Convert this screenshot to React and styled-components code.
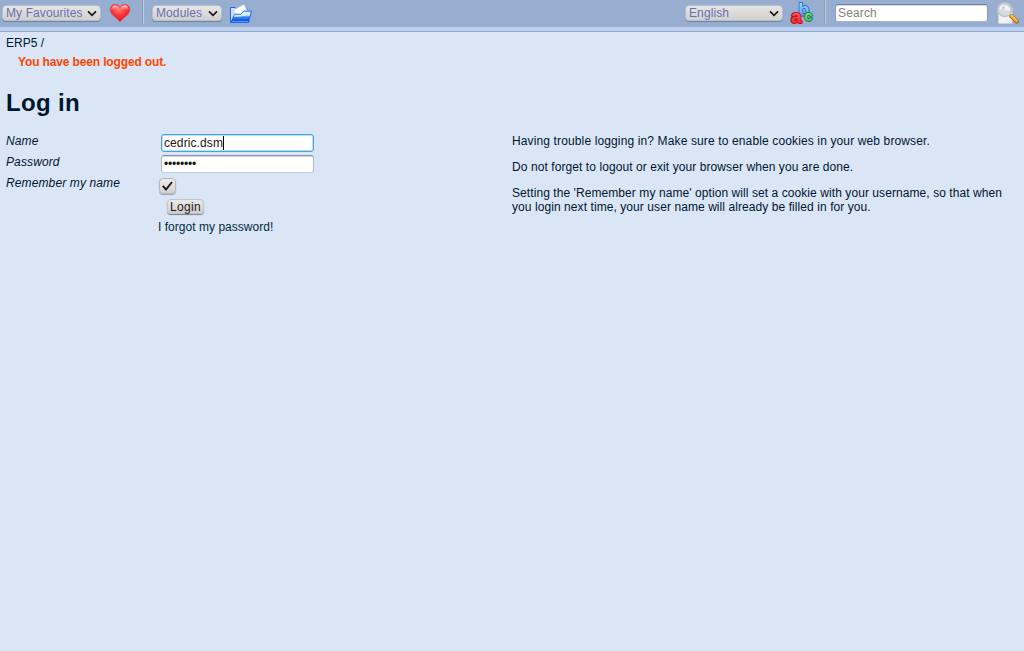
import React from "react";
import styled, { createGlobalStyle } from "styled-components";

const GlobalStyle = createGlobalStyle`
  * { box-sizing: border-box; }
  body {
    margin: 0;
    min-height: 100vh;
    background: #dae6f6;
    color: #001730;
    font: 12px/14px "Liberation Sans", Arial, sans-serif;
  }
`;

const Toolbar = styled.header`
  display: flex;
  justify-content: space-between;
  height: 32px;
  padding: 0 4px 0 2px;
  background: linear-gradient(#97aed1 0 27px, #bed0ef 27px 31px, #91a9cf 31px);
`;

const ToolGroup = styled.div`
  display: flex;
  align-items: flex-start;
`;

const SelectBox = styled.button`
  display: flex;
  align-items: center;
  justify-content: space-between;
  width: ${(p) => p.$width}px;
  height: 16px;
  margin-top: 5px;
  padding: 0 3px;
  border: 1px solid #b4bfd0;
  border-radius: 4px;
  background: linear-gradient(#e6e6e6, #d2d0ce);
  box-shadow: 0 1px 1px #71839f;
  color: #6a70b4;
  font: 12px/14px "Liberation Sans", Arial, sans-serif;
  letter-spacing: 0.1px;
  white-space: nowrap;
`;

const IconButton = styled.button`
  display: block;
  width: 24px;
  height: 24px;
  margin: 2px 0 0 ${(p) => p.$gap}px;
  padding: 0;
  border: 0;
  background: none;
`;

const Divider = styled.div`
  width: 2px;
  height: 24px;
  margin: 0 ${(p) => p.$after}px 0 10px;
  border-left: 1px solid #879ebc;
  border-right: 1px solid #b9cddd;
`;

const TextInput = styled.input`
  display: block;
  width: 153px;
  height: 18px;
  padding: 0 2px;
  border: 1px solid;
  border-color: #8790a1 #b2bccb #c3cddd;
  border-radius: 3px;
  outline: 0;
  background: #fff;
  box-shadow: inset 0 1px 1px #d3d8e1;
  color: #1c1712;
  font: 12px/14px "Liberation Sans", Arial, sans-serif;
  letter-spacing: ${(p) => (p.type === "password" ? "-0.2px" : "0.15px")};
  &::placeholder { color: #85827c; opacity: 1; }
`;

const SearchInput = styled(TextInput)`
  margin-top: 4px;
  border-color: #6b7f9f #8ba1c2 #9fb4d4;
`;

const FocusedField = styled.div`
  display: flex;
  align-items: center;
  width: 153px;
  height: 18px;
  padding: 0 2px;
  border: 1px solid #45a3d8;
  border-radius: 3px;
  background: #fff;
  box-shadow: inset 0 0 0 1px #b9e1f4;
  color: #1c1712;
  letter-spacing: 0.1px;
`;

const Caret = styled.span`
  width: 1px;
  height: 14px;
  background: #000;
`;

const Breadcrumb = styled.nav`
  padding: 4px 6px 0;
`;

const Notice = styled.p`
  margin: 5px 18px 0;
  color: #ff4500;
  font-weight: bold;
  letter-spacing: -0.14px;
`;

const Title = styled.h1`
  margin: 20px 6px 17px;
  font-size: 24px;
  line-height: 28px;
  letter-spacing: 0.35px;
`;

const Content = styled.main`
  display: grid;
  grid-template-columns: 506px 1fr;
  padding: 0 6px;
`;

const Fields = styled.form`
  display: flex;
  flex-direction: column;
`;

const Row = styled.div`
  display: grid;
  grid-template-columns: 155px 153px;
  height: 21px;
`;

const Label = styled.label`
  font-style: italic;
  letter-spacing: 0.12px;
`;

const CheckBox = styled.button`
  display: block;
  width: 17px;
  height: 16px;
  margin: 2px 0 0 -2px;
  padding: 0;
  border: 1px solid #b6b8bc;
  border-radius: 4px;
  background: linear-gradient(#f0efee, #d3d0cd);
  box-shadow: 0 1px 1px #98a0ad;
`;

const LoginButton = styled.button`
  width: 37px;
  height: 15px;
  margin: 2px 0 0 161px;
  padding: 0;
  border: 1px solid #c3c5c9;
  border-radius: 4px;
  background: linear-gradient(#ebeae9, #d2d0ce);
  box-shadow: 0 1px 1px #77808f;
  color: #1c1712;
  font: 12px/12px "Liberation Sans", Arial, sans-serif;
  letter-spacing: 0.3px;
`;

const ForgotLink = styled.a`
  margin: 6px 0 0 152px;
  color: #002b40;
  letter-spacing: 0.03px;
`;

const Help = styled.section`
  width: 500px;
`;

const HelpText = styled.p`
  margin: 0 0 12px;
  letter-spacing: ${(p) => p.$spacing}px;
`;

const Chevron = () => (
  <svg width="10" height="7" viewBox="0 0 10 7">
    <path d="M1 1.4 5 5.3l4-3.9" fill="none" stroke="#17130f" strokeWidth="1.6" />
  </svg>
);

const Select = ({ label, width }) => (
  <SelectBox type="button" $width={width}>
    {label}
    <Chevron />
  </SelectBox>
);

const HeartIcon = () => (
  <svg width="24" height="24" viewBox="0 0 24 24">
    <defs>
      <radialGradient id="heart" cx=".45" cy=".3" r=".75">
        <stop offset="0" stopColor="#ff7c7c" />
        <stop offset=".45" stopColor="#ff3436" />
        <stop offset="1" stopColor="#dc0a18" />
      </radialGradient>
      <linearGradient id="shine" x2="0" y2="1">
        <stop offset="0" stopColor="#ffe2e2" />
        <stop offset="1" stopColor="#ff7474" stopOpacity=".15" />
      </linearGradient>
    </defs>
    <path d="M12 5.1C10.7 1.8 6 1.6 3.8 3.6c-2.4 2.2-2 5.8.1 8.5 2.1 2.8 5.5 4.4 8.1 7.6 2.5-3.2 6-4.8 8.1-7.6 2.1-2.7 2.5-6.3.1-8.5C18 1.6 13.3 1.8 12 5.1Z" fill="url(#heart)" stroke="#cd5667" strokeWidth=".7" />
    <path d="M3.2 8.5c-.5-6 6.5-6.7 8.2-1.8-2 2.1-5.8 1-8.2 1.8Zm9.4-1.8c1.6-4.9 8.4-4.4 8.2 1.6-2.4-.8-6.1.5-8.2-1.6Z" fill="url(#shine)" />
  </svg>
);

const FolderIcon = () => (
  <svg width="24" height="24" viewBox="0 0 24 24">
    <defs>
      <linearGradient id="folder" x1="0" y1="0" x2="0" y2="1">
        <stop offset="0" stopColor="#a7dbff" />
        <stop offset=".35" stopColor="#d2f1ff" />
        <stop offset=".5" stopColor="#398df2" />
        <stop offset="1" stopColor="#0037d4" />
      </linearGradient>
    </defs>
    <path d="M1.5 20V5.5h4.7l1.5 1.6H18V20Z" fill="#cddffc" stroke="#2864e8" />
    <path d="m5 8 9.7-5.5L19.5 11 7 15Z" fill="#fff" stroke="#b5cdf5" strokeWidth=".6" />
    <path d="m1.8 20.5 3.8-8.2h6.3l2.6-3.2h8L19.6 20.5Z" fill="url(#folder)" stroke="#2462e4" strokeWidth=".9" />
    <path d="M5.8 13h6.6l2.5-3.1h6l-.9 3.1c-4.8-.4-8 2.4-15 2Z" fill="#e3f7ff" opacity=".7" />
    <path d="M3 19.6h16" stroke="#55a5ff" />
  </svg>
);

const LettersIcon = () => (
  <svg width="24" height="24" viewBox="0 0 24 24" fontFamily="Liberation Sans, Arial, sans-serif" fontWeight="bold" strokeLinejoin="round" style={{ paintOrder: "stroke" }}>
    <defs>
      <linearGradient id="lettera" x2="0" y2="1"><stop stopColor="#ff8585" /><stop offset="1" stopColor="#f01820" /></linearGradient>
      <linearGradient id="letterb" x2="0" y2="1"><stop stopColor="#b9e4ff" /><stop offset="1" stopColor="#3094f1" /></linearGradient>
      <linearGradient id="letterc" x2="0" y2="1"><stop stopColor="#b5f1b6" /><stop offset="1" stopColor="#31b84c" /></linearGradient>
    </defs>
    <text x="8.2" y="13.8" fontSize="18" fill="url(#letterb)" stroke="#2871c6" strokeWidth="1.8">b</text>
    <text x="1" y="20.8" fontSize="19" fill="url(#lettera)" stroke="#be101d" strokeWidth="2.2">a</text>
    <text x="14.5" y="19.3" fontSize="14" fill="url(#letterc)" stroke="#19813a" strokeWidth="2">c</text>
  </svg>
);

const SearchIcon = () => (
  <svg width="24" height="24" viewBox="0 0 24 24">
    <path d="M2.5 6h13.7v15.5H2.5Z" fill="#f2f2f2" stroke="#ccd0d5" strokeWidth=".6" />
    <circle cx="8.7" cy="7.7" r="6.8" fill="#d3d9df" fillOpacity=".93" stroke="#c4c5c7" strokeWidth="1.6" />
    <path d="M9 3.4v5h5A5.4 5.4 0 0 0 9 3Z" fill="#f4f6f7" />
    <path d="M4.2 7.5c0-2.5 1.6-4 3.8-4.2" fill="none" stroke="#fff" strokeWidth="1.3" />
    <path d="m13.5 12.5 2.1 2" stroke="#eee" strokeWidth="2.5" />
    <path d="m15.3 14.2 5.6 5.4" stroke="#a96918" strokeWidth="4.2" strokeLinecap="round" />
    <path d="m15.3 14 5.4 5.1" stroke="#f6ad32" strokeWidth="2.6" strokeLinecap="round" />
    <path d="m15.5 13.2 5 4.8" stroke="#ffe58b" strokeWidth=".9" />
  </svg>
);

const CheckMark = () => (
  <svg width="15" height="14" viewBox="0 0 15 14" display="block">
    <path d="m2.8 6.8 3.2 3.7 6-7.5" fill="none" stroke="#211b17" strokeWidth="2" />
  </svg>
);

export default function App() {
  return (
    <>
      <GlobalStyle />
      <Toolbar>
        <ToolGroup>
          <Select label="My Favourites" width={99} />
          <IconButton $gap={7} aria-label="Favourites"><HeartIcon /></IconButton>
          <Divider $after={8} />
          <Select label="Modules" width={70} />
          <IconButton $gap={7} aria-label="Modules"><FolderIcon /></IconButton>
        </ToolGroup>
        <ToolGroup>
          <Select label="English" width={98} />
          <IconButton $gap={7} aria-label="Language"><LettersIcon /></IconButton>
          <Divider $after={9} />
          <SearchInput placeholder="Search" />
          <IconButton $gap={8} aria-label="Search"><SearchIcon /></IconButton>
        </ToolGroup>
      </Toolbar>
      <Breadcrumb>ERP5 /</Breadcrumb>
      <Notice>You have been logged out.</Notice>
      <Title>Log in</Title>
      <Content>
        <Fields>
          <Row>
            <Label>Name</Label>
            <FocusedField>cedric.dsm<Caret /></FocusedField>
          </Row>
          <Row>
            <Label>Password</Label>
            <TextInput type="password" defaultValue="password" />
          </Row>
          <Row>
            <Label>Remember my name</Label>
            <CheckBox type="button" role="checkbox" aria-checked="true"><CheckMark /></CheckBox>
          </Row>
          <LoginButton type="button">Login</LoginButton>
          <ForgotLink>I forgot my password!</ForgotLink>
        </Fields>
        <Help>
          <HelpText $spacing={0.13}>Having trouble logging in? Make sure to enable cookies in your web browser.</HelpText>
          <HelpText $spacing={0.08}>Do not forget to logout or exit your browser when you are done.</HelpText>
          <HelpText $spacing={0.075}>Setting the 'Remember my name' option will set a cookie with your username, so that when you login next time, your user name will already be filled in for you.</HelpText>
        </Help>
      </Content>
    </>
  );
}
